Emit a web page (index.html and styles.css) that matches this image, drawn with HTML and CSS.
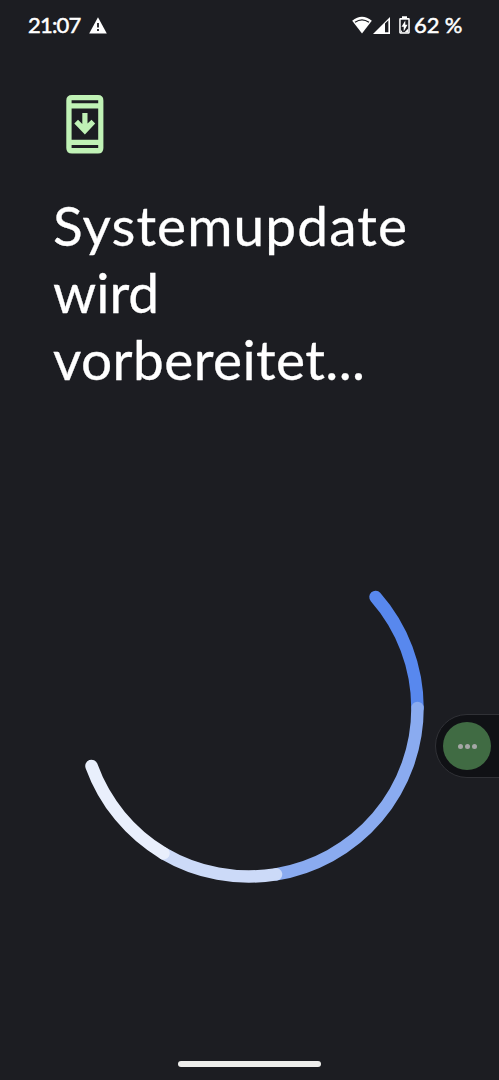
FILE: index.html
```html
<!DOCTYPE html>
<html lang="de">
  <head>
    <meta charset="UTF-8" />
    <meta name="viewport" content="width=device-width, initial-scale=1.0" />
    <link rel="stylesheet" href="styles.css">
    <title>Systemupdate</title>
  </head>
  <body>
    <header class="statusBar">
      <span class="clock">21:07</span>
      <svg class="warning" width="18" height="17" viewBox="0 0 18 17">
        <path d="M9 0.3 L17.8 16.5 H0.2 Z" fill="#fff" />
        <path d="M9 6v4.6M9 12v2" stroke="#1c1d22" stroke-width="1.8" />
      </svg>
      <div class="statusRight">
        <svg class="wifi" width="20" height="18" viewBox="0 0 20 18">
          <path d="M0.2 4.8 Q10 -3.2 19.8 4.8 L10 17.4 Z" fill="#fff" />
          <path d="M3 6.2 Q10 1.4 17 6.2" fill="none" stroke="#1c1d22" stroke-width="1.2" />
        </svg>
        <svg class="signal" width="17" height="17" viewBox="0 0 17 17">
          <path d="M0 17 L17 0 V17 Z" fill="#fff" />
          <path d="M12 6.5 L15.4 3.3 V15.3 H12 Z" fill="#1c1d22" />
        </svg>
        <svg class="battery" width="11" height="18" viewBox="0 0 11 18">
          <path d="M3 0.3h5v1.8H9.7Q10.8 2.1 10.8 3.2V16.6Q10.8 17.7 9.7 17.7H1.3Q0.2 17.7 0.2 16.6V3.2Q0.2 2.1 1.3 2.1H3Z" fill="#fff" />
          <path d="M1.7 3.7H9.3V16.2H1.7Z" fill="#1c1d22" />
          <path d="M1.7 13.5L3.6 16.2H1.7ZM9.3 12.5V16.2H5.5Z" fill="#fff" />
          <path d="M6.3 4.4V8.8H8.5L4.7 15.4V10.8H2.5Z" fill="#fff" />
        </svg>
        <span class="percent">62 %</span>
      </div>
    </header>

    <main class="content">
      <svg class="updateIcon" width="38" height="59" viewBox="0 0 38 59">
        <path fill="#c0f2b6" fill-rule="evenodd" d="M6 0H32Q37.4 0 37.4 5.5V53Q37.4 58.5 32 58.5H6Q0.3 58.5 0.3 53V5.5Q0.3 0 6 0ZM5.6 5.3V8.2H32.2V5.3ZM5.6 13.4V44.8H32.2V13.4ZM5.6 50V53H32.2V50Z" />
        <path fill="#c0f2b6" d="M16.3 18H21.5V28.6L25.5 24.7L29.2 28.4L18.9 39.5L8.3 28.4L12 24.7L16.3 28.9Z" />
      </svg>
      <h1><span class="line1">Systemupdate</span><br><span class="line2">wird</span><br><span class="line3">vorbereitet...</span></h1>
      <svg class="spinner" width="350" height="350" viewBox="74 533 350 350">
        <path d="M375.5 597 A168.5 168.5 0 0 1 417.5 708" stroke="#5888ee" />
        <path d="M417.5 708 A168.5 168.5 0 0 1 276 874.3" stroke="#8aabf0" />
        <path d="M276 874.3 A168.5 168.5 0 0 1 163.5 853.3" stroke="#ccdaf8" />
        <path d="M163.5 853.3 A168.5 168.5 0 0 1 91.5 766" stroke="#e9effc" />
      </svg>
    </main>

    <div class="bubble">
      <div class="bubbleButton"><i></i><i></i><i></i></div>
    </div>

    <div class="navHandle"></div>
  </body>
</html>
```

FILE: styles.css
```css
* {
  box-sizing: border-box;
}

body {
  position: relative;
  display: flex;
  flex-direction: column;
  height: 1080px;
  margin: 0;
  overflow: hidden;
  color: #fff;
  background-color: #1c1d22;
  font-family: Lato, "Liberation Sans", sans-serif;
}

svg {
  display: block;
  flex: none;
}

.statusBar {
  display: flex;
  align-items: center;
  height: 50px;
  padding: 0 38px 2px 28px;
  font-size: 22px;
  font-weight: 400;
  -webkit-text-stroke: 0.5px #fff;
}

.statusBar svg {
  margin-top: 2px;
}

.clock {
  width: 61px;
  letter-spacing: -0.8px;
}

.statusRight {
  display: flex;
  align-items: center;
  margin-left: auto;
}

.signal {
  margin: 0 9px 0 1px;
}

.percent {
  width: 47px;
  margin-left: 4px;
  letter-spacing: -0.1px;
  white-space: nowrap;
}

.content {
  flex: 1;
}

.updateIcon {
  margin: 45px 0 0 66px;
}

h1 {
  height: 201px;
  margin: 38px 0 0 53px;
  font-size: 55px;
  font-weight: 400;
  line-height: 67px;
  white-space: nowrap;
  -webkit-text-stroke: 0.3px #fff;
}

.line1 {
  letter-spacing: 1.1px;
}

.line3 {
  letter-spacing: 0.4px;
}

.spinner {
  margin: 140px 0 0 74px;
}

.spinner path {
  fill: none;
  stroke-width: 12.5;
  stroke-linecap: round;
}

/* floating button that hangs over the right edge */
.bubble {
  position: absolute;
  top: 714px;
  right: -2px;
  display: flex;
  align-items: center;
  width: 66px;
  height: 64px;
  padding-left: 7px;
  border: 1.5px solid #303136;
  border-radius: 32px 0 0 32px;
  background-color: #101115;
}

.bubbleButton {
  display: flex;
  align-items: center;
  justify-content: center;
  gap: 2px;
  width: 48px;
  height: 48px;
  border-radius: 50%;
  background-color: #406b43;
}

.bubbleButton i {
  width: 5px;
  height: 5px;
  border-radius: 50%;
  background-color: #a5a7a6;
}

.navHandle {
  width: 143px;
  height: 6px;
  margin: 0 auto 13px;
  border-radius: 3px;
  background-color: #eeeeec;
}
```
